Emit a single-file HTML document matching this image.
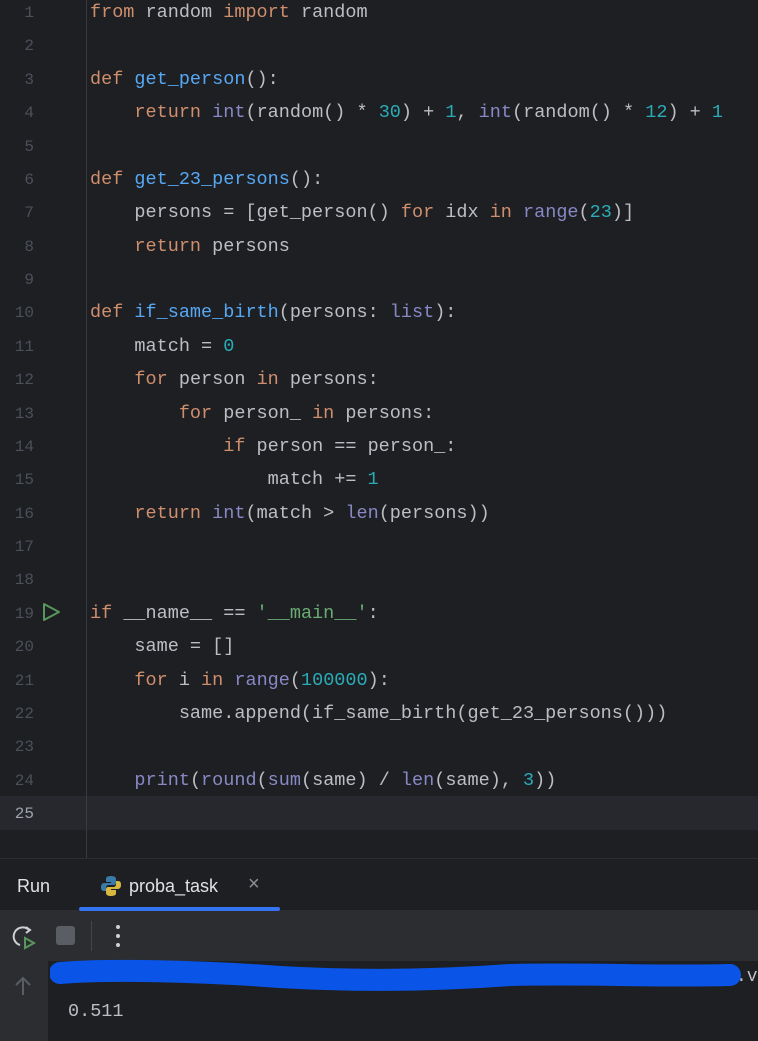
<!DOCTYPE html><html><head><style>
body{margin:0;width:758px;height:1036px;background:#1e1f22;overflow:hidden;font-family:"Liberation Mono",monospace;position:relative}
.ed{position:absolute;top:0;left:0;width:758px;height:858px;background:#1e1f22}
.gl{position:absolute;left:86px;top:0;width:1px;height:858px;background:#393b40}
.ln{position:absolute;left:0;width:34px;text-align:right;color:#4b5059;font-size:16px}
.cl{position:absolute;left:90px;font-size:18.5px;color:#bcbec4;white-space:pre}
.k{color:#cf8e6d}.f{color:#56a8f5}.b{color:#8888c6}.n{color:#2aacb8}.s{color:#6aab73}
.cur{position:absolute;left:0;top:796px;width:758px;height:34px;background:#26282e}
.pn{position:absolute;top:858px;left:0;width:758px;height:178px;background:#1e1f22;border-top:1px solid #2b2d30}
</style></head><body>
<div class="ed">
<div class="cur"></div>
<div class="gl"></div>
</div>
<div id="code"></div>
<script>
var L=[
'<span class="k">from</span> random <span class="k">import</span> random','',
'<span class="k">def</span> <span class="f">get_person</span>():',
'    <span class="k">return</span> <span class="b">int</span>(random() * <span class="n">30</span>) + <span class="n">1</span>, <span class="b">int</span>(random() * <span class="n">12</span>) + <span class="n">1</span>','',
'<span class="k">def</span> <span class="f">get_23_persons</span>():',
'    persons = [get_person() <span class="k">for</span> idx <span class="k">in</span> <span class="b">range</span>(<span class="n">23</span>)]',
'    <span class="k">return</span> persons','',
'<span class="k">def</span> <span class="f">if_same_birth</span>(persons: <span class="b">list</span>):',
'    match = <span class="n">0</span>',
'    <span class="k">for</span> person <span class="k">in</span> persons:',
'        <span class="k">for</span> person_ <span class="k">in</span> persons:',
'            <span class="k">if</span> person == person_:',
'                match += <span class="n">1</span>',
'    <span class="k">return</span> <span class="b">int</span>(match &gt; <span class="b">len</span>(persons))','','',
'<span class="k">if</span> __name__ == <span class="s">\'__main__\'</span>:',
'    same = []',
'    <span class="k">for</span> i <span class="k">in</span> <span class="b">range</span>(<span class="n">100000</span>):',
'        same.append(if_same_birth(get_23_persons()))','',
'    <span class="b">print</span>(<span class="b">round</span>(<span class="b">sum</span>(same) / <span class="b">len</span>(same), <span class="n">3</span>))',''];
var h='';for(var i=0;i<25;i++){var y=i*33.375+2;h+='<div class="ln" style="top:'+(y+2)+'px;'+(i==24?'color:#a1a3ab;':'')+'">'+(i+1)+'</div><div class="cl" style="top:'+y+'px">'+L[i]+'</div>';}
document.getElementById('code').innerHTML=h;
</script>
<svg style="position:absolute;left:40px;top:601px" width="22" height="22"><path d="M4 3 L19 11 L4 19 Z" fill="none" stroke="#57965c" stroke-width="2" stroke-linejoin="round"/></svg>
<div class="pn">
<div style="position:absolute;left:0;top:0;width:758px;height:51px;background:#1e1f22;border-bottom:1px solid #2b2d30"></div>
<div style="position:absolute;left:17px;top:17px;font-family:'Liberation Sans',sans-serif;font-size:18px;color:#dfe1e5">Run</div>
<svg style="position:absolute;left:99px;top:15px" width="24" height="24"><path d="M12 2 C7 2 7 4 7 5 V8 H12 V9 H5 C3 9 2 11 2 13 C2 16 3 17 5 17 H7 V14 C7 12 8 11 10 11 H15 C16 11 17 10 17 9 V5 C17 3 15 2 12 2Z" fill="#3a7aa6"/><path d="M12 22 C17 22 17 20 17 19 V16 H12 V15 H19 C21 15 22 13 22 11 C22 8 21 7 19 7 H17 V10 C17 12 16 13 14 13 H9 C8 13 7 14 7 15 V19 C7 21 9 22 12 22Z" fill="#d9b840"/></svg>
<div style="position:absolute;left:129px;top:17px;font-family:'Liberation Sans',sans-serif;font-size:18px;color:#dfe1e5">proba_task</div>
<div style="position:absolute;left:248px;top:14px;font-family:'Liberation Sans',sans-serif;font-size:20px;color:#8c8f94">×</div>
<div style="position:absolute;left:79px;top:48px;width:201px;height:4px;border-radius:2px;background:#3574f0"></div>
<div style="position:absolute;left:0;top:52px;width:758px;height:50px;background:#2b2d30"></div>
<svg style="position:absolute;left:12px;top:66px" width="26" height="26"><path d="M17 5 A9 9 0 1 0 8 20" fill="none" stroke="#ced0d6" stroke-width="2"/><path d="M14 2 L18 5 L14 8" fill="none" stroke="#ced0d6" stroke-width="2"/><path d="M13 13 L22 18 L13 23 Z" fill="none" stroke="#57965c" stroke-width="2"/></svg>
<div style="position:absolute;left:56px;top:67px;width:19px;height:19px;border-radius:3px;background:#5a5d63"></div>
<div style="position:absolute;left:91px;top:62px;width:1px;height:30px;background:#43454a"></div>
<div style="position:absolute;left:116px;top:66px;width:4px;height:4px;border-radius:2px;background:#ced0d6;box-shadow:0 9px 0 #ced0d6,0 18px 0 #ced0d6"></div>
<div style="position:absolute;left:0;top:102px;width:48px;height:80px;background:#2b2d30"></div>
<svg style="position:absolute;left:12px;top:116px" width="22" height="22"><path d="M11 20 V3 M4 10 L11 3 L18 10" fill="none" stroke="#5a5d63" stroke-width="2"/></svg>
<svg style="position:absolute;left:50px;top:100px" width="708" height="40"><path d="M10 14 C60 10 150 12 230 18 C300 22 380 22 460 16 C540 14 600 18 680 16" fill="none" stroke="#0a55e8" stroke-width="22" stroke-linecap="round"/></svg>
<div style="position:absolute;left:736px;top:108px;font-size:18px;color:#bcbec4">.v</div>
<div style="position:absolute;left:68px;top:142px;font-size:18.5px;color:#bcbec4">0.511</div>
</div>
</body></html>
